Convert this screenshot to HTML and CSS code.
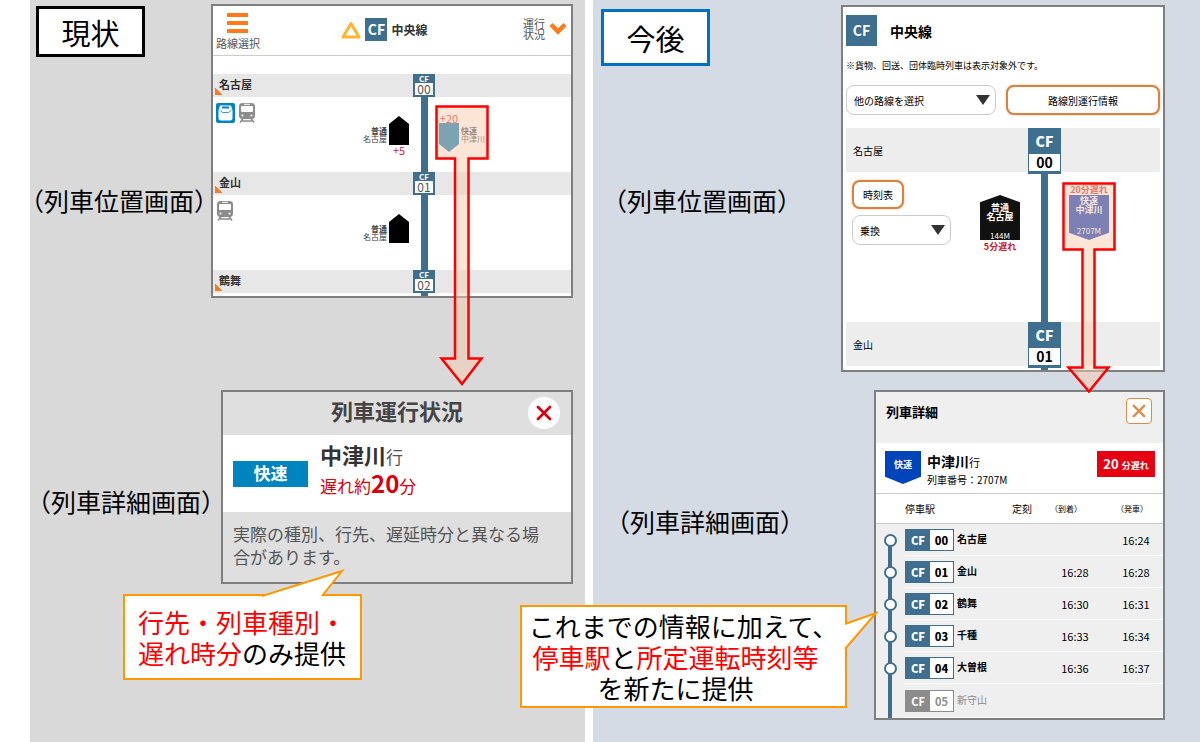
FILE: index.html
```html
<!DOCTYPE html>
<html lang="ja">
<head>
    <meta charset="UTF-8">
    <title>列車位置情報の変更点</title>
    <link rel="stylesheet" href="styles.css">
</head>
<body>
<!-- アイコン定義 -->
<svg class="defs" aria-hidden="true">
    <symbol id="train" viewBox="0 0 18 20">
        <rect x="1" width="16" height="16" rx="3.500" fill="#8c8c8c"/>
        <rect x="3" y="3" width="12" height="6" rx="1" fill="#fff"/>
        <path d="M6 1.300h6" stroke="#fff"/>
        <circle cx="4.500" cy="12.500" r="1" fill="#fff"/>
        <circle cx="13.500" cy="12.500" r="1" fill="#fff"/>
        <path d="M5 15.500l-3 4M13 15.500l3 4M4 18h10" fill="none" stroke="#8c8c8c" stroke-width="1.500"/>
    </symbol>
    <symbol id="cross" viewBox="0 0 16 16">
        <path d="M2 2l12 12M14 2L2 14" fill="none" stroke="currentColor" stroke-width="2.800" stroke-linecap="round"/>
    </symbol>
</svg>
<div class="compare">
    <!-- 現状 -->
    <section class="panel now">
        <div class="side">
            <h2 class="tag">現状</h2>
            <p class="caption">（列車位置画面）</p>
        </div>
        <div class="screen board">
            <div class="head">
                <button class="menu">
                    <svg width="21" height="20" viewBox="0 0 21 20"><path d="M0 2h21M0 10h21M0 18h21" stroke="#ff7a1a" stroke-width="4"/></svg>
                    <span>路線選択</span>
                </button>
                <div class="line">
                    <svg width="20" height="18" viewBox="0 0 20 18"><path d="M10 2.500L18 16H2z" fill="none" stroke="#ffb52e" stroke-width="3" stroke-linejoin="round"/></svg>
                    <b class="cf">CF</b>
                    <b>中央線</b>
                </div>
                <button class="status">
                    <span>運行<br>状況</span>
                    <svg width="18" height="14" viewBox="0 0 18 14"><path d="M2 2.500l7 7 7-7" fill="none" stroke="#ff7a1a" stroke-width="4.500"/></svg>
                </button>
            </div>
            <div class="band"><a href="#nagoya">名古屋</a><div class="stop"><b>CF</b><span>00</span></div></div>
            <div class="track">
                <div class="up">
                    <div class="links">
                        <svg width="19" height="20" viewBox="0 0 19 20">
                            <rect width="19" height="20" rx="2" fill="#0084c0"/>
                            <path d="M4 2.500h11l1.500 5V15q0 2.500-2.500 2.500H5q-2.500 0-2.500-2.500V7.500z" fill="#fff"/>
                            <path d="M6 3.500h7v2H6z" fill="#0084c0"/>
                            <path d="M3.500 7l3 2.500h6l3-2.500" fill="none" stroke="#0084c0" stroke-width="0.800"/>
                        </svg>
                        <svg width="18" height="20"><use href="#train"/></svg>
                    </div>
                    <div class="dest"><b>普通</b><br>名古屋</div>
                    <div class="mark">
                        <svg width="20" height="29" viewBox="0 0 20 29"><path d="M10 0l10 8v21H0V8z"/></svg>
                        <span class="late">+5</span>
                    </div>
                </div>
                <i class="rail"></i>
                <div class="down">
                    <div class="mark">
                        <span class="late">+20</span>
                        <svg width="20" height="29" viewBox="0 0 20 29"><path d="M0 0h20v21l-10 8-10-8z" fill="#0079b9"/></svg>
                    </div>
                    <div class="dest"><b>快速</b><br>中津川</div>
                </div>
            </div>
            <div class="band"><a href="#kanayama">金山</a><div class="stop"><b>CF</b><span>01</span></div></div>
            <div class="track">
                <div class="up">
                    <div class="links"><svg width="18" height="20"><use href="#train"/></svg></div>
                    <div class="dest"><b>普通</b><br>名古屋</div>
                    <div class="mark">
                        <svg width="20" height="29" viewBox="0 0 20 29"><path d="M10 0l10 8v21H0V8z"/></svg>
                    </div>
                </div>
                <i class="rail"></i>
            </div>
            <div class="band"><a href="#tsurumai">鶴舞</a><div class="stop"><b>CF</b><span>02</span></div></div>
            <div class="track end"><i class="rail"></i></div>
            <svg class="arrow" width="54" height="282" viewBox="0 0 54 282">
                <path d="M1.500 1.500h51v52h-19v200h13L27 279 6.500 253.500h13.500v-200H1.500z"/>
            </svg>
        </div>
        <div class="side second">
            <p class="caption">（列車詳細画面）</p>
        </div>
        <div class="screen dialog">
            <div class="title">
                <h3>列車運行状況</h3>
                <button class="close" aria-label="閉じる"><svg width="16" height="16"><use href="#cross"/></svg></button>
            </div>
            <div class="train">
                <b class="kind">快速</b>
                <div>
                    <p class="to"><b>中津川</b>行</p>
                    <p class="delay">遅れ約<b>20</b>分</p>
                </div>
            </div>
            <p class="note">実際の種別、行先、遅延時分と異なる場合があります。</p>
        </div>
        <div class="callout">
            <svg class="tail" width="84" height="28" viewBox="0 0 84 28"><path d="M0 27L80 2 60 27"/></svg>
            <p><em>行先・列車種別・</em><br><em>遅れ時分</em>のみ提供</p>
        </div>
    </section>

    <!-- 今後 -->
    <section class="panel next">
        <div class="side">
            <h2 class="tag">今後</h2>
            <p class="caption">（列車位置画面）</p>
        </div>
        <div class="screen board">
            <div class="head"><b class="cf">CF</b><b>中央線</b></div>
            <p class="notice">※貨物、回送、団体臨時列車は表示対象外です。</p>
            <div class="tools">
                <div class="select"><select aria-label="路線"><option>他の路線を選択</option></select></div>
                <button class="orange">路線別運行情報</button>
            </div>
            <div class="band"><span class="name">名古屋</span><div class="stop"><b>CF</b><span>00</span></div></div>
            <div class="track">
                <div class="up">
                    <div class="links">
                        <button class="orange">時刻表</button>
                        <div class="select"><select aria-label="乗換"><option>乗換</option></select></div>
                    </div>
                    <div class="mark">
                        <div class="body local"><b>普通</b><b>名古屋</b><small>144M</small></div>
                        <b class="late">5分遅れ</b>
                    </div>
                </div>
                <i class="rail"></i>
                <div class="down">
                    <div class="mark">
                        <b class="late">20分遅れ</b>
                        <div class="body rapid"><b>快速</b><b>中津川</b><small>2707M</small></div>
                    </div>
                </div>
            </div>
            <div class="band"><span class="name">金山</span><div class="stop"><b>CF</b><span>01</span></div></div>
            <div class="track end"><i class="rail"></i></div>
            <svg class="arrow" width="54" height="212" viewBox="0 0 54 212">
                <path d="M1.500 1.500h51v66h-20v118h14L27 209.500 6.500 185.500h14v-118h-19z"/>
            </svg>
        </div>
        <div class="side second">
            <p class="caption">（列車詳細画面）</p>
        </div>
        <div class="screen dialog">
            <div class="title">
                <h3>列車詳細</h3>
                <button class="close" aria-label="閉じる"><svg width="14" height="14"><use href="#cross"/></svg></button>
            </div>
            <div class="train">
                <b class="kind">快速</b>
                <div>
                    <p class="to"><b>中津川</b>行</p>
                    <p class="number">列車番号：2707M</p>
                </div>
                <b class="delay">20 <small>分遅れ</small></b>
            </div>
            <table class="times">
                <colgroup><col class="c-rail"><col><col class="c-std"><col class="c-arr"><col class="c-dep"></colgroup>
                <thead>
                <tr><th></th><th class="left">停車駅</th><th>定刻</th><th class="arr">（到着）</th><th class="dep">（発車）</th></tr>
                </thead>
                <tbody>
                <tr><td class="dot first"><i></i></td><td class="left"><span class="no"><b>CF</b><b>00</b></span>名古屋</td><td></td><td></td><td>16:24</td></tr>
                <tr><td class="dot"><i></i></td><td class="left"><span class="no"><b>CF</b><b>01</b></span>金山</td><td></td><td>16:28</td><td>16:28</td></tr>
                <tr><td class="dot"><i></i></td><td class="left"><span class="no"><b>CF</b><b>02</b></span>鶴舞</td><td></td><td>16:30</td><td>16:31</td></tr>
                <tr><td class="dot"><i></i></td><td class="left"><span class="no"><b>CF</b><b>03</b></span>千種</td><td></td><td>16:33</td><td>16:34</td></tr>
                <tr><td class="dot"><i></i></td><td class="left"><span class="no"><b>CF</b><b>04</b></span>大曽根</td><td></td><td>16:36</td><td>16:37</td></tr>
                <tr class="off"><td class="dot"></td><td class="left"><span class="no"><b>CF</b><b>05</b></span>新守山</td><td></td><td></td><td></td></tr>
                </tbody>
            </table>
        </div>
        <div class="callout">
            <svg class="tail" width="34" height="40" viewBox="0 0 34 40"><path d="M1 14L32 3 1 39"/></svg>
            <p>これまでの情報に加えて、</p>
            <p class="short"><em>停車駅</em>と<em>所定運転時刻等</em></p>
            <p class="short">を新たに提供</p>
        </div>
    </section>
</div>
</body>
</html>
```
FILE: styles.css
```css
* {
    margin: 0;
    padding: 0;
    box-sizing: border-box;
}
body {
    background-color: #fff;
    font-family: "Noto Sans CJK JP", sans-serif;
    color: #000;
}
button,
select {
    font-family: inherit;
    color: inherit;
    border: 0;
    background: none;
}
svg {
    display: block;
}
em {
    font-style: normal;
    color: #f00;
}
.defs {
    position: absolute;
    width: 0;
    height: 0;
}
.compare {
    display: grid;
    grid-template-columns: 555fr 607fr;
    gap: 8px;
    padding-left: 30px;
    min-height: 100vh;
}

/* 左右共通 */
.panel {
    position: relative;
    display: grid;
    grid-template-rows: 386px auto;
    align-items: start;
    padding-top: 4px;
}
.now {
    grid-template-columns: 181fr 362fr;
    padding-right: 12px;
    background-color: #d9d9d9;
}
.next {
    grid-template-columns: 248fr 324fr;
    padding-right: 35px;
    background-color: #d5dbe5;
}
.side {
    min-width: 0;
}
.tag {
    width: 109px;
    height: 51px;
    margin: 2px 0 0 6px;
    border: 3px solid #000;
    background-color: #fff;
    font-size: 29px;
    font-weight: 400;
    line-height: 47px;
    text-align: center;
}
.next .tag {
    height: 57px;
    margin: 5px 0 0 8px;
    border-color: #0070c0;
    line-height: 52px;
}
.caption {
    margin: 123px 0 0 -11px;
    font-size: 25px;
    line-height: 40px;
    white-space: nowrap;
}
.next .caption {
    margin: 114px 0 0 9px;
}
.now .second .caption {
    margin: 91px 0 0 -4px;
}
.next .second .caption {
    margin: 111px 0 0 12px;
}
.screen {
    position: relative;
    border: 2px solid #7f7f7f;
    background-color: #fff;
}
.band,
.track {
    display: grid;
}
.rail {
    justify-self: center;
    width: 7px;
    height: 100%;
    background-color: #3f6f8f;
}
.stop {
    display: flex;
    flex-direction: column;
    background-color: #3f6f8f;
    color: #fff;
    text-align: center;
}
.stop span {
    background-color: #fff;
}
.end {
    height: 4px;
}
.end .rail {
    grid-column: 2;
}
.cf {
    background-color: #3f6f8f;
    color: #fff;
    text-align: center;
}
.arrow {
    position: absolute;
    z-index: 2;
    overflow: visible;
}
.arrow path {
    fill: rgba(248, 203, 173, 0.5);
    stroke: #f00;
    stroke-width: 2.5;
}
.callout {
    position: absolute;
    z-index: 3;
    border: 2px solid #ff9800;
    background-color: #fff;
    font-size: 26px;
    line-height: 31px;
    white-space: nowrap;
}
.tail {
    position: absolute;
}
.tail path {
    fill: #fff;
    stroke: #ff9800;
    stroke-width: 2;
}

/* 現状：列車位置 */
.now .head {
    display: flex;
    justify-content: space-between;
    align-items: center;
    height: 50px;
    padding: 0 4px 0 3px;
    border-bottom: 1px solid #ccc;
    margin-bottom: 18px;
}
.menu,
.status {
    font-size: 11px;
    line-height: 11px;
    color: #555;
}
.menu svg {
    margin: 0 auto 5px 11px;
}
.menu {
    padding-top: 1px;
}
.line {
    display: flex;
    align-items: center;
    gap: 4px;
    margin-right: 14px;
    padding-bottom: 2px;
    font-size: 12px;
    color: #333;
}
.line .cf {
    width: 22px;
    font-size: 14px;
    line-height: 23px;
}
.status {
    display: flex;
    align-items: center;
    gap: 4px;
    padding-bottom: 4px;
}
.now .band,
.now .track {
    grid-template-columns: 1fr 22px 136px;
}
.now .band {
    height: 23px;
    background-color: #e7e7e7;
}
.now .band a {
    padding-left: 6px;
    background: linear-gradient(45deg, #ff7a1a 50%, transparent 50%) 2px 13px / 8px 8px no-repeat;
    color: #333;
    font-size: 11px;
    font-weight: 700;
    line-height: 21px;
    text-decoration: none;
}
.now .stop {
    padding: 0 2px 2px;
}
.now .stop b {
    font-size: 8px;
    line-height: 9px;
}
.now .stop span {
    color: #555;
    font-size: 12px;
    line-height: 12px;
}
.now .track {
    height: 75px;
}
.now .end {
    height: 3px;
}
.now .up {
    display: flex;
    padding-right: 4px;
}
.now .links {
    display: flex;
    flex: 1;
    gap: 3px;
    padding: 6px 0 0 3px;
}
.dest {
    margin: 30px 2px 0;
    color: #444;
    font-size: 8px;
    line-height: 8px;
    text-align: right;
}
.now .up .mark {
    padding-top: 19px;
}
.now .mark {
    width: 20px;
    text-align: center;
}
.now .late {
    display: block;
    color: #e02030;
    font-size: 11px;
    line-height: 10px;
}
.now .down {
    display: flex;
    padding-left: 4px;
}
.now .down .mark {
    padding-top: 16px;
}
.now .down .dest {
    text-align: left;
}
.now .arrow {
    right: 82px;
    top: 99px;
}

/* 現状：列車詳細 */
.now .dialog {
    height: 194px;
    margin-left: 10px;
    background-color: #dfdfdf;
}
.now .title {
    position: relative;
    height: 43px;
    color: #444;
    text-align: center;
}
.now .title h3 {
    font-size: 22px;
    line-height: 36px;
}
.now .close {
    position: absolute;
    right: 11px;
    top: 5px;
    width: 32px;
    height: 32px;
    padding: 8px;
    border-radius: 16px;
    background-color: #fff;
    color: #d7000f;
}
.now .train {
    display: flex;
    gap: 12px;
    height: 77px;
    padding: 7px 10px;
    background-color: #fff;
    color: #555;
    font-size: 17px;
    line-height: 29px;
}
.now .kind {
    width: 75px;
    height: 26px;
    margin-top: 19px;
    background-color: #0084c0;
    color: #fff;
    line-height: 24px;
    text-align: center;
}
.now .train p b {
    line-height: 20px;
}
.now .to b {
    color: #333;
    font-size: 22px;
}
.now .delay {
    color: #d7000f;
}
.now .delay b {
    font-size: 24px;
}
.now .note {
    padding: 10px 28px 0 10px;
    color: #555;
    font-size: 17px;
    line-height: 23px;
}
.now .callout {
    left: 93px;
    top: 594px;
    width: 239px;
    height: 86px;
    padding: 10px 13px;
}
.now .tail {
    left: 137px;
    top: -27px;
}

/* 今後：列車位置 */
.next .board {
    margin-top: 1px;
    padding: 8px 3px 0;
    font-size: 10px;
}
.next .head {
    display: flex;
    align-items: center;
    gap: 13px;
    font-size: 14px;
}
.next .head .cf {
    width: 31px;
    line-height: 31px;
}
.notice {
    padding: 12px 0;
    font-size: 9px;
    line-height: 15px;
}
.tools {
    display: grid;
    grid-template-columns: 150fr 154fr;
    gap: 10px;
    height: 30px;
    margin-bottom: 13px;
}
.select {
    position: relative;
    height: 30px;
}
.select::after {
    content: "";
    position: absolute;
    right: 6px;
    top: 10px;
    border: 7px solid transparent;
    border-top: 10px solid #333;
    border-bottom: 0;
    pointer-events: none;
}
.select select {
    appearance: none;
    width: 100%;
    height: 100%;
    padding: 0 7px;
    border: 1px solid #ccc;
    border-radius: 8px;
    background-color: #fff;
    font-size: 10px;
}
.orange {
    border: 2px solid #d9823f;
    border-radius: 8px;
    background-color: #fff;
    box-shadow: 0 0 2px #e8a878;
    font-size: 10px;
}
.next .band,
.next .track {
    grid-template-columns: 1fr 33px 99px;
}
.next .band {
    height: 44px;
    background-color: #ededed;
}
.next .name {
    padding-left: 7px;
    line-height: 46px;
}
.next .stop {
    padding: 0 1px 1px;
    font-size: 14px;
    font-weight: 700;
}
.next .stop b {
    line-height: 26px;
}
.next .stop span {
    color: #000;
    line-height: 17px;
}
.next .track {
    height: 150px;
}
.next .end {
    height: 4px;
}
.next .up {
    display: flex;
    justify-content: space-between;
    padding: 8px 8px 0 6px;
}
.next .links {
    width: 99px;
}
.next .links .orange {
    width: 52px;
    height: 29px;
    margin-bottom: 6px;
}
.next .mark {
    width: 40px;
    text-align: center;
}
.next .up .mark {
    padding-top: 15px;
}
.next .late {
    display: block;
    margin: 0 -4px;
    color: #c8202c;
    font-size: 9px;
    line-height: 14px;
}
.body {
    display: flex;
    flex-direction: column;
    height: 45px;
    color: #fff;
    font-size: 9px;
    line-height: 9px;
}
.body small {
    margin-top: auto;
    font-size: 8px;
}
.local {
    padding-top: 8px;
    background-color: #111;
    clip-path: polygon(50% 0, 100% 16%, 100% 100%, 0 100%, 0 16%);
}
.rapid {
    padding: 1px 0 5px;
    background-color: #0035bb;
    clip-path: polygon(0 0, 100% 0, 100% 84%, 50% 100%, 0 84%);
}
.next .down {
    padding: 13px 0 0 8px;
}
.next .down .late {
    line-height: 10px;
}
.next .arrow {
    right: 47px;
    top: 175px;
}

/* 今後：列車詳細 */
.next .dialog {
    margin-left: 33px;
    background-color: #efefef;
}
.next .title {
    display: flex;
    justify-content: space-between;
    height: 51px;
    padding: 6px 11px 0 10px;
}
.next .title h3 {
    font-size: 13px;
    line-height: 28px;
}
.next .close {
    width: 26px;
    height: 26px;
    padding: 5px;
    border: 1px solid #e08a4a;
    border-radius: 4px;
    background-color: #fff;
    color: #e08a4a;
}
.next .train {
    display: flex;
    height: 51px;
    padding: 8px 8px 0 9px;
    border-bottom: 1px solid #ccc;
    background-color: #fff;
}
.next .kind {
    width: 36px;
    height: 33px;
    margin-right: 6px;
    background-color: #0044bb;
    clip-path: polygon(0 0, 100% 0, 100% 78%, 50% 100%, 0 78%);
    color: #fff;
    font-size: 9px;
    line-height: 28px;
    text-align: center;
}
.next .to {
    font-size: 11px;
    line-height: 21px;
}
.next .to b {
    font-size: 14px;
}
.number {
    font-size: 10px;
    line-height: 14px;
}
.next .delay {
    width: 58px;
    height: 26px;
    margin-left: auto;
    background-color: #e60012;
    color: #fff;
    font-size: 13px;
    line-height: 26px;
    text-align: center;
}
.next .delay small {
    font-size: 9px;
}
.times {
    width: 100%;
    table-layout: fixed;
    border-spacing: 0;
    font-size: 11px;
    text-align: center;
}
.c-rail {
    width: 28px;
}
.c-std {
    width: 38px;
}
.c-arr {
    width: 68px;
}
.c-dep {
    width: 54px;
}
.times th {
    height: 30px;
    border-bottom: 1px solid #ccc;
    background-color: #fff;
    font-size: 10px;
    font-weight: 400;
}
.times .arr,
.times .dep {
    font-size: 8px;
}
.times .arr {
    padding-right: 18px;
}
.times .dep {
    padding-right: 8px;
}
.times td {
    height: 32px;
    border-bottom: 1px solid #fff;
}
.times .left {
    padding-left: 1px;
    text-align: left;
    white-space: nowrap;
}
.times td.left {
    font-size: 10px;
    font-weight: 700;
}
.times .dot {
    border-bottom: 0;
    background: linear-gradient(#3f6f8f, #3f6f8f) center bottom / 4px 100% no-repeat;
}
.times .first {
    background-size: 4px 50%;
}
.times .off td {
    height: 34px;
}
.dot i {
    display: block;
    width: 13px;
    height: 13px;
    margin: 0 auto;
    border: 2px solid #3f6f8f;
    border-radius: 50%;
    background-color: #fff;
}
.no {
    display: inline-grid;
    grid-template-columns: 24px 23px;
    width: 49px;
    margin-right: 3px;
    border: 1px solid #3f6f8f;
    background-color: #fff;
    font-size: 11px;
    line-height: 20px;
    text-align: center;
    vertical-align: middle;
}
.no b:first-child {
    background-color: #3f6f8f;
    color: #fff;
}
.times .off .left {
    color: #8c8c8c;
    font-weight: 400;
}
.off .no {
    border-color: #8c8c8c;
}
.off .no b:first-child {
    background-color: #8c8c8c;
}
.next .callout {
    left: -73px;
    top: 605px;
    width: 327px;
    height: 103px;
    padding-top: 3px;
    text-align: center;
}
.next .tail {
    left: 322px;
    top: 3px;
}
.short {
    padding-right: 16px;
}
```
